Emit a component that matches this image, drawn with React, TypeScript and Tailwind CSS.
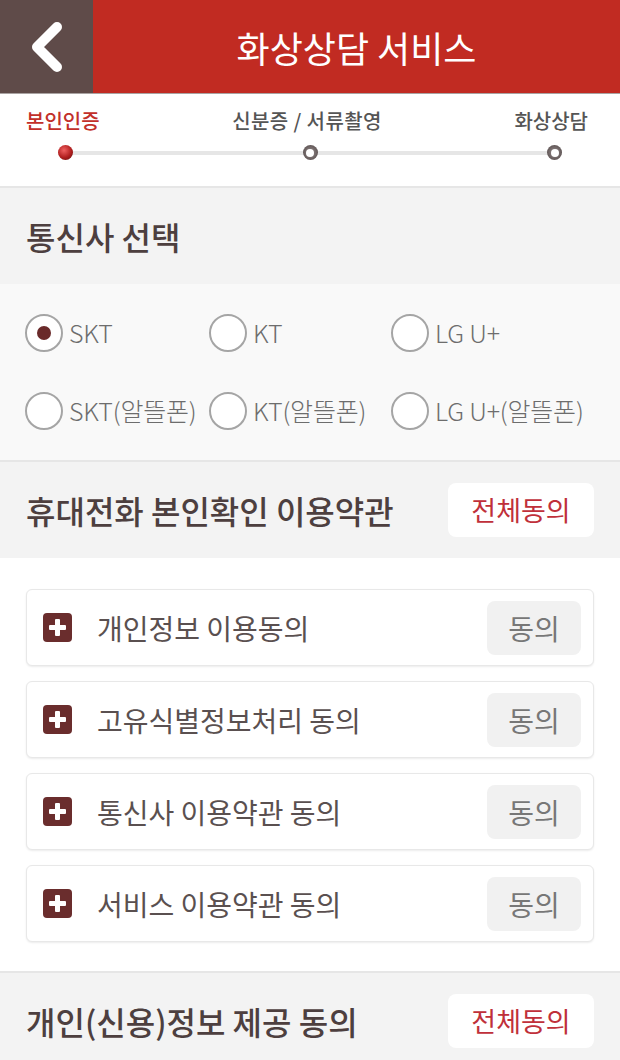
import React from 'react'

const font = { fontFamily: '"Noto Sans CJK KR", "Noto Sans", sans-serif' }

const carriers = ['SKT', 'KT', 'LG U+', 'SKT(알뜰폰)', 'KT(알뜰폰)', 'LG U+(알뜰폰)']
const terms = ['개인정보 이용동의', '고유식별정보처리 동의', '통신사 이용약관 동의', '서비스 이용약관 동의']

const Radio = ({ label, checked }: { label: string; checked?: boolean }) => (
  <div className="flex items-center gap-[6px]">
    <span className="flex h-[38px] w-[38px] shrink-0 items-center justify-center rounded-full border-2 border-[#a5a5a5] bg-white">
      {checked && <span className="h-[14px] w-[14px] rounded-full bg-[#6a2a2a]" />}
    </span>
    <span className="whitespace-nowrap text-[25px] font-light tracking-[-0.2px] text-[#6d6d6d]">{label}</span>
  </div>
)

const SectionHeader = ({ title, button }: { title: string; button?: boolean }) => (
  <div className="flex h-[96px] items-center justify-between bg-[#f3f3f3] pl-[26px] pr-[26px]">
    <h2 className="text-[32px] font-medium text-[#4d3f3f]">{title}</h2>
    {button && (
      <button className="flex h-[54px] w-[146px] items-center justify-center rounded-[8px] bg-white text-[27px] text-[#c0303a]">
        전체동의
      </button>
    )}
  </div>
)

const PlusIcon = () => (
  <span className="flex h-[29px] w-[29px] shrink-0 items-center justify-center rounded-[4px] bg-[#6a2d2d]">
    <svg width="17" height="17" viewBox="0 0 17 17">
      <rect x="6" y="0" width="5" height="17" rx="1" fill="#fff" />
      <rect x="0" y="6" width="17" height="5" rx="1" fill="#fff" />
    </svg>
  </span>
)

const StepDot = ({ active }: { active?: boolean }) =>
  active ? (
    <span className="h-[15px] w-[15px] rounded-full bg-[radial-gradient(circle_at_40%_35%,#f06060,#b01e1e_55%,#5a1010)]" />
  ) : (
    <span className="flex h-[15px] w-[15px] items-center justify-center rounded-full bg-[radial-gradient(circle,#9a9090,#4a4040)]">
      <span className="h-[8px] w-[8px] rounded-full bg-white" />
    </span>
  )

export default function App() {
  return (
    <div className="min-h-[1060px] w-[620px] bg-white" style={font}>
      {/* Header */}
      <header className="flex h-[93px]">
        <div className="flex w-[93px] items-center justify-center bg-[#5f4b49]">
          <svg width="40" height="56" viewBox="0 0 40 56">
            <path d="M30 8 L10 28 L30 48" fill="none" stroke="#fff" strokeWidth="10" strokeLinecap="round" strokeLinejoin="round" />
          </svg>
        </div>
        <div className="flex flex-1 items-center justify-center bg-[#c12b22]">
          <h1 className="text-[36px] font-normal text-white">화상상담 서비스</h1>
        </div>
      </header>
      <div className="h-px bg-[#a9a3a2]" />

      {/* Steps */}
      <div className="h-[94px] border-b-2 border-[#e6e6e6] bg-white pt-[12px]">
        <div className="flex justify-between pl-[26px] pr-[32px] text-[20px] font-medium text-[#555]">
          <span className="text-[#c2302a]">본인인증</span>
          <span className="whitespace-pre tracking-[0.4px]">신분증 / 서류촬영</span>
          <span>화상상담</span>
        </div>
        <div className="mx-[58px] mt-[9px] flex justify-between bg-[linear-gradient(#e6e6e6,#e6e6e6)] bg-[length:100%_4px] bg-center bg-no-repeat">
          <StepDot active />
          <StepDot />
          <StepDot />
        </div>
      </div>

      {/* Carrier */}
      <SectionHeader title="통신사 선택" />
      <div className="grid grid-cols-[184px_182px_1fr] gap-y-[40px] border-b-2 border-[#e6e6e6] bg-[#f9f9f9] pb-[30px] pl-[25px] pt-[30px]">
        {carriers.map((c, i) => (
          <Radio key={c} label={c} checked={i === 0} />
        ))}
      </div>

      {/* Terms */}
      <SectionHeader title="휴대전화 본인확인 이용약관" button />
      <div className="flex flex-col gap-[15px] border-b-2 border-[#e6e6e6] bg-white px-[26px] pb-[29px] pt-[31px]">
        {terms.map((t) => (
          <div
            key={t}
            className="flex h-[77px] items-center rounded-[6px] border border-[#e8e8e8] bg-white pl-[16px] pr-[12px] shadow-[0_1px_2px_rgba(0,0,0,0.08)]"
          >
            <PlusIcon />
            <span className="ml-[25px] flex-1 text-[28px] text-[#5a5050]">{t}</span>
            <button className="flex h-[54px] w-[94px] items-center justify-center rounded-[8px] bg-[#f1f1f1] text-[28px] text-[#777]">
              동의
            </button>
          </div>
        ))}
      </div>

      <SectionHeader title="개인(신용)정보 제공 동의" button />
    </div>
  )
}
